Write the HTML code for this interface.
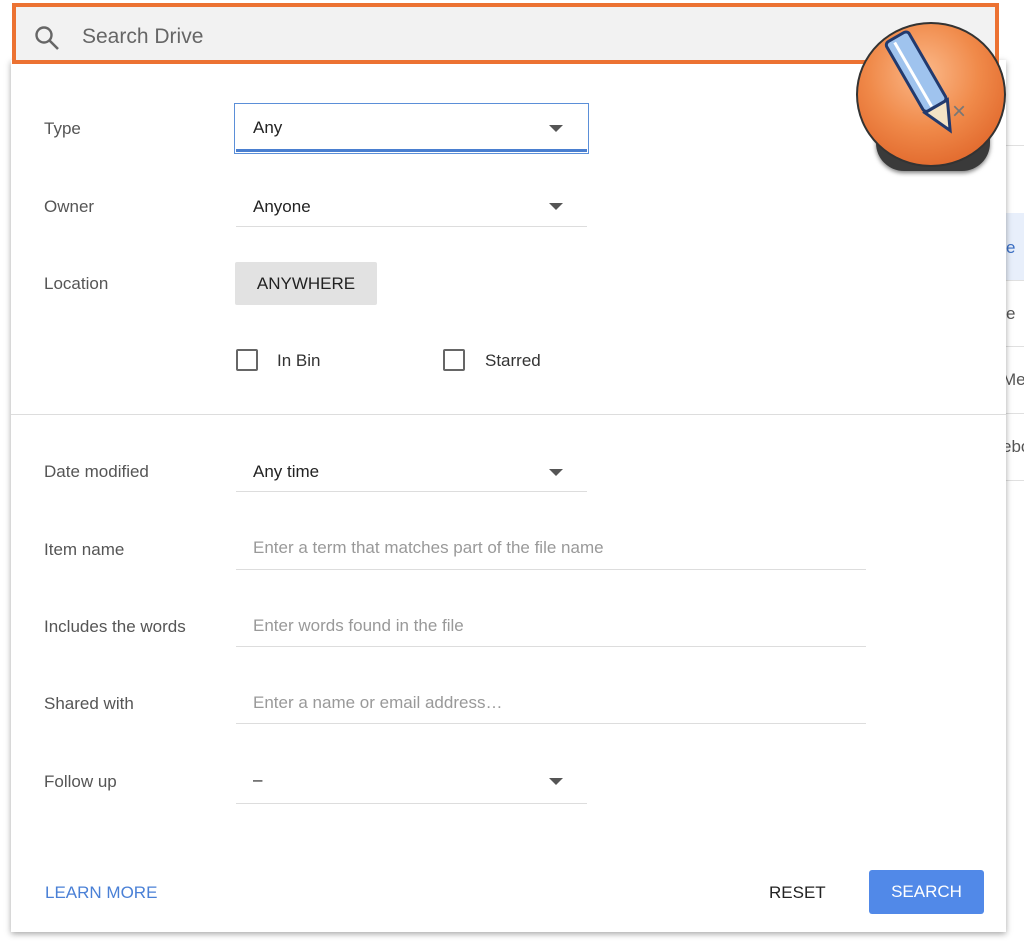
<!DOCTYPE html>
<html><head><meta charset="utf-8"><style>
*{margin:0;padding:0;box-sizing:border-box}
body{width:1024px;height:941px;background:#fff;position:relative;overflow:hidden;font-family:"Liberation Sans",Arial,sans-serif}
.a{position:absolute}
.lab{position:absolute;left:44px;font-size:17px;color:#555;line-height:20px}
.val{position:absolute;left:253px;font-size:17px;color:#222;line-height:20px}
.ph{position:absolute;left:253px;font-size:17px;color:#999;line-height:20px}
.ul{position:absolute;left:236px;height:1px;background:#ddd}
.tri{position:absolute;width:0;height:0;border-left:7px solid transparent;border-right:7px solid transparent;border-top:7px solid #555}
.cb{position:absolute;width:22px;height:22px;border:2px solid #666;border-radius:2px}
</style></head><body>
<div class="a" style="left:1000px;top:140px;width:24px;height:801px;background:#fff"></div>
<div class="a" style="left:1000px;top:213px;width:24px;height:67px;background:#e8effb"></div>
<div class="a" style="left:1000px;top:145px;width:24px;height:1px;background:#e0e0e0"></div>
<div class="a" style="left:1000px;top:280px;width:24px;height:1px;background:#e0e0e0"></div>
<div class="a" style="left:1000px;top:346px;width:24px;height:1px;background:#e0e0e0"></div>
<div class="a" style="left:1000px;top:413px;width:24px;height:1px;background:#e0e0e0"></div>
<div class="a" style="left:1000px;top:480px;width:24px;height:1px;background:#e0e0e0"></div>
<div class="a" style="left:1006px;top:238px;font-size:17px;color:#3b6fc4">e</div>
<div class="a" style="left:1006px;top:304px;font-size:17px;color:#555">e</div>
<div class="a" style="left:1002px;top:370px;font-size:17px;color:#555">Me</div>
<div class="a" style="left:1002px;top:437px;font-size:17px;color:#555">ebo</div>
<div class="a" style="left:11px;top:60px;width:995px;height:872px;background:#fff;box-shadow:0 2px 6px rgba(0,0,0,.35)"></div>
<div class="a" style="left:12px;top:3px;width:987px;height:61px;background:#f2f2f2;border:4px solid #ec7232"></div>
<svg class="a" style="left:33px;top:24px" width="28" height="28" viewBox="0 0 28 28"><circle cx="11" cy="11" r="7.5" fill="none" stroke="#666" stroke-width="2.4"/><line x1="16.5" y1="16.5" x2="25" y2="25" stroke="#666" stroke-width="2.6"/></svg>
<div class="a" style="left:82px;top:25px;font-size:21px;color:#666">Search Drive</div>
<div class="lab" style="top:119px">Type</div>
<div class="a" style="left:234px;top:103px;width:355px;height:51px;border:1px solid #5b8fd8"></div>
<div class="a" style="left:236px;top:149px;width:351px;height:3px;background:#4a7fd0"></div>
<div class="val" style="top:118px">Any</div>
<div class="tri" style="left:549px;top:125px"></div>
<div class="lab" style="top:197px">Owner</div>
<div class="val" style="top:197px">Anyone</div>
<div class="tri" style="left:549px;top:203px"></div>
<div class="ul" style="top:226px;width:351px"></div>
<div class="lab" style="top:274px">Location</div>
<div class="a" style="left:235px;top:262px;width:142px;height:43px;background:#e2e2e2;border-radius:2px;font-size:17px;color:#222;text-align:center;line-height:43px">ANYWHERE</div>
<div class="cb" style="left:236px;top:349px"></div>
<div class="a" style="left:277px;top:351px;font-size:17px;color:#333">In Bin</div>
<div class="cb" style="left:443px;top:349px"></div>
<div class="a" style="left:485px;top:351px;font-size:17px;color:#333">Starred</div>
<div class="a" style="left:11px;top:414px;width:995px;height:1px;background:#ddd"></div>
<div class="lab" style="top:462px">Date modified</div>
<div class="val" style="top:462px">Any time</div>
<div class="tri" style="left:549px;top:469px"></div>
<div class="ul" style="top:491px;width:351px"></div>
<div class="lab" style="top:540px">Item name</div>
<div class="ph" style="top:538px">Enter a term that matches part of the file name</div>
<div class="ul" style="top:569px;width:630px"></div>
<div class="lab" style="top:617px">Includes the words</div>
<div class="ph" style="top:616px">Enter words found in the file</div>
<div class="ul" style="top:646px;width:630px"></div>
<div class="lab" style="top:694px">Shared with</div>
<div class="ph" style="top:693px">Enter a name or email address…</div>
<div class="ul" style="top:723px;width:630px"></div>
<div class="lab" style="top:772px">Follow up</div>
<div class="val" style="top:770px">–</div>
<div class="tri" style="left:549px;top:778px"></div>
<div class="ul" style="top:803px;width:351px"></div>
<div class="a" style="left:45px;top:883px;font-size:17px;color:#4a80d6">LEARN MORE</div>
<div class="a" style="left:769px;top:883px;font-size:17px;color:#222">RESET</div>
<div class="a" style="left:869px;top:870px;width:115px;height:44px;background:#5189e8;border-radius:3px;color:#fff;font-size:17px;text-align:center;line-height:44px">SEARCH</div>
<div class="a" style="left:876px;top:105px;width:114px;height:66px;border-radius:28px;background:#3a3a3a;box-shadow:0 2px 4px rgba(0,0,0,.5)"></div>
<div class="a" style="left:856px;top:22px;width:150px;height:145px;border-radius:50%;background:radial-gradient(circle at 45% 35%,#fbb98a 0%,#f08a4a 45%,#d9561c 100%);border:2px solid #333"></div>
<div class="a" style="left:952px;top:98px;font-size:24px;color:#777">×</div>
<svg class="a" style="left:870px;top:25px" width="110" height="120" viewBox="0 0 110 120">
<g transform="rotate(-30 55 60)"><rect x="41" y="4" width="26" height="80" rx="4" fill="#9fc3ee" stroke="#223a6e" stroke-width="3"/><line x1="50" y1="8" x2="50" y2="82" stroke="#fff" stroke-width="3"/><polygon points="41,84 67,84 54,112" fill="#f3e3c5" stroke="#223a6e" stroke-width="3"/></g>
</svg>
</body></html>
